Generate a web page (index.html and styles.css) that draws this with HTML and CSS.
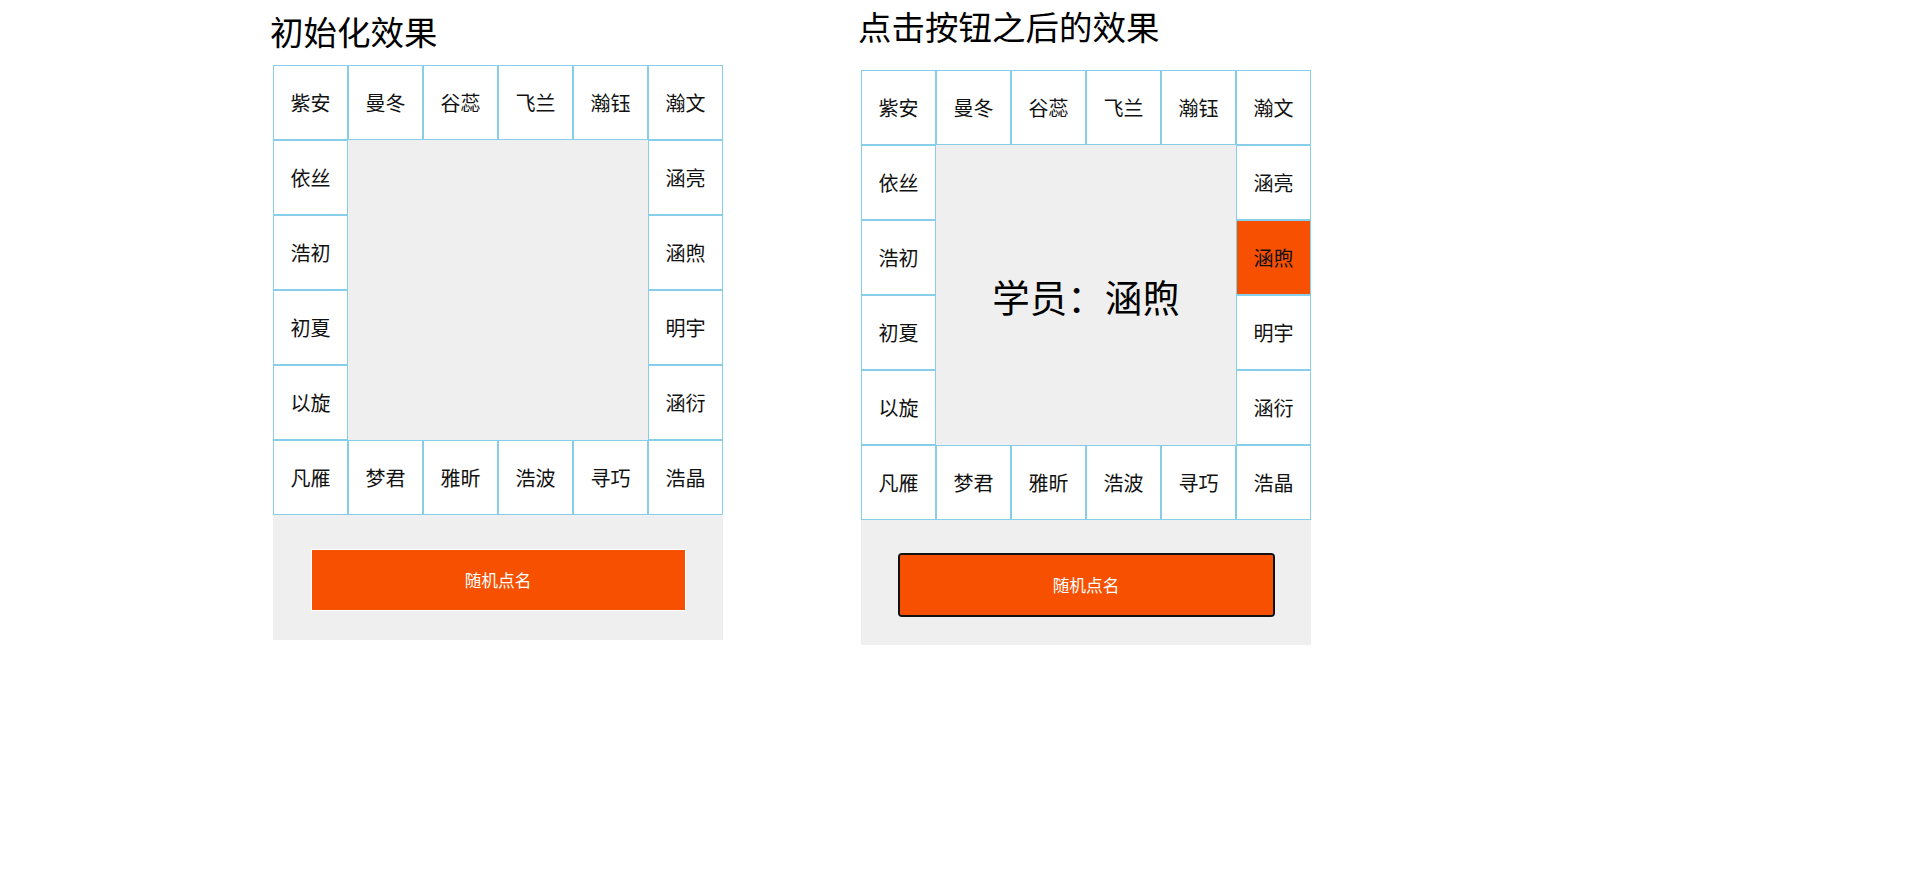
FILE: index.html
```html
<!DOCTYPE html>
<html lang="zh">
<head>
<meta charset="utf-8">
<title>随机点名</title>
<link rel="stylesheet" href="styles.css">
</head>
<body>
<div class="page">
  <section class="demo demo-init">
    <h2 class="demo-title">初始化效果</h2>
    <div class="panel">
      <div class="board">
        <div class="cell">紫安</div><div class="cell">曼冬</div><div class="cell">谷蕊</div><div class="cell">飞兰</div><div class="cell">瀚钰</div><div class="cell">瀚文</div>
        <div class="cell">依丝</div>
        <div class="center"></div>
        <div class="cell">涵亮</div>
        <div class="cell">浩初</div><div class="cell">涵煦</div>
        <div class="cell">初夏</div><div class="cell">明宇</div>
        <div class="cell">以旋</div><div class="cell">涵衍</div>
        <div class="cell">凡雁</div><div class="cell">梦君</div><div class="cell">雅昕</div><div class="cell">浩波</div><div class="cell">寻巧</div><div class="cell">浩晶</div>
      </div>
      <div class="actions">
        <button class="pick-btn" type="button">随机点名</button>
      </div>
    </div>
  </section>

  <section class="demo demo-after">
    <h2 class="demo-title">点击按钮之后的效果</h2>
    <div class="panel">
      <div class="board">
        <div class="cell">紫安</div><div class="cell">曼冬</div><div class="cell">谷蕊</div><div class="cell">飞兰</div><div class="cell">瀚钰</div><div class="cell">瀚文</div>
        <div class="cell">依丝</div>
        <div class="center">学员：涵煦</div>
        <div class="cell">涵亮</div>
        <div class="cell">浩初</div><div class="cell active">涵煦</div>
        <div class="cell">初夏</div><div class="cell">明宇</div>
        <div class="cell">以旋</div><div class="cell">涵衍</div>
        <div class="cell">凡雁</div><div class="cell">梦君</div><div class="cell">雅昕</div><div class="cell">浩波</div><div class="cell">寻巧</div><div class="cell">浩晶</div>
      </div>
      <div class="actions">
        <button class="pick-btn focused" type="button">随机点名</button>
      </div>
    </div>
  </section>
</div>
</body>
</html>
```

FILE: styles.css
```css
* { box-sizing: border-box; }

html, body {
  margin: 0;
  padding: 0;
  background: #fff;
}

body {
  font-family: "Noto Sans CJK SC", "Noto Sans", sans-serif;
  color: #000;
}

.page {
  display: flex;
  align-items: flex-start;
  gap: 138px;
  padding-left: 273px;
}

.demo {
  width: 450px;
}

.demo-title {
  margin: 0;
  font-size: 33.5px;
  font-weight: normal;
  line-height: 40px;
  margin-left: -3px;
  white-space: nowrap;
}

.demo-init .demo-title {
  margin-top: 11px;
  margin-bottom: 14px;
}

.demo-after .demo-title {
  margin-top: 6px;
  margin-bottom: 24px;
}

.panel {
  width: 450px;
  background: #efefef;
}

.board {
  display: grid;
  grid-template-columns: repeat(6, 75px);
  grid-auto-rows: 75px;
}

.cell {
  background: #fff;
  border: 1px solid #87ceeb;
  display: flex;
  align-items: center;
  justify-content: center;
  font-size: 20px;
  color: #111;
}

.cell.active {
  background: #f75000;
}

.center {
  grid-column: span 4;
  grid-row: span 4;
  display: flex;
  align-items: center;
  justify-content: center;
  font-size: 37.5px;
  background: #efefef;
}

.actions {
  display: flex;
  justify-content: center;
  padding: 34px 0 29px;
}

.pick-btn {
  width: 375px;
  height: 62px;
  border: 1px solid #fff;
  background: #f75000;
  color: #fff;
  font-family: "Noto Sans CJK SC", "Noto Sans", sans-serif;
  font-size: 16.7px;
  padding: 0;
}

.pick-btn.focused {
  outline: 2px solid #111;
  outline-offset: -1px;
  border-radius: 3px;
  box-shadow: 0 0 0 1px #fff;
}
```
